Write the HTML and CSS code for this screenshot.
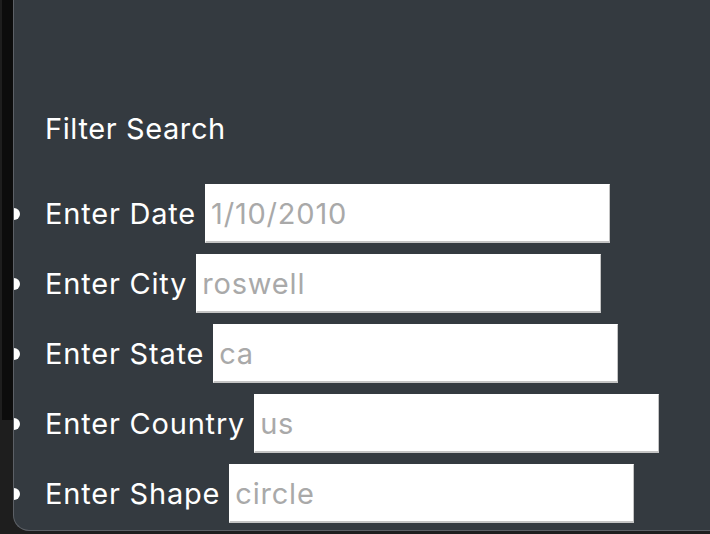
FILE: index.html
```html
<!DOCTYPE html>
<html>
<head>
<meta charset="utf-8">
<link rel="stylesheet" href="styles.css">
</head>
<body>
<div class="page">
  <div class="side"></div>
  <div class="panel">
    <h4 class="title">Filter Search</h4>
    <ul class="filters">
      <li class="row"><label class="lbl" for="date">Enter Date</label><input class="field" id="date" type="text" placeholder="1/10/2010"></li>
      <li class="row"><label class="lbl" for="city">Enter City</label><input class="field" id="city" type="text" placeholder="roswell"></li>
      <li class="row"><label class="lbl" for="state">Enter State</label><input class="field" id="state" type="text" placeholder="ca"></li>
      <li class="row"><label class="lbl" for="country">Enter Country</label><input class="field" id="country" type="text" placeholder="us"></li>
      <li class="row"><label class="lbl" for="shape">Enter Shape</label><input class="field" id="shape" type="text" placeholder="circle"></li>
    </ul>
  </div>
</div>
</body>
</html>
```

FILE: styles.css
```css
html, body {
  margin: 0;
  padding: 0;
  background: #1e1e1e;
}
.page {
  display: flex;
  width: 710px;
  height: 534px;
  overflow: hidden;
  background: #1e1e1e;
  font-family: Inter, "Liberation Sans", sans-serif;
}
.side {
  flex: 0 0 11px;
  margin-left: 2px;
  height: 420px;
  background: #0c0c0c;
}
.panel {
  flex: 1 0 auto;
  height: 531px;
  box-sizing: border-box;
  background: #343a40;
  border-left: 1px solid #5c6066;
  border-bottom: 1px solid #5c6066;
  border-bottom-left-radius: 16px;
  overflow: hidden;
  padding: 112px 0 0 31px;
}
.title {
  margin: 0;
  font-size: 29px;
  letter-spacing: 0.6px;
  font-weight: 400;
  line-height: 34px;
  color: #ffffff;
}
.filters {
  list-style: none;
  margin: 38px 0 0 0;
  padding: 0;
}
.row {
  position: relative;
  display: flex;
  align-items: center;
  gap: 9px;
  height: 59px;
  margin-bottom: 11px;
}
.row::before {
  content: "";
  position: absolute;
  left: -37px;
  top: 24px;
  width: 12px;
  height: 12px;
  border-radius: 50%;
  background: #ffffff;
}
.lbl {
  font-size: 29px;
  letter-spacing: 0.8px;
  line-height: 34px;
  color: #ffffff;
  white-space: nowrap;
}
.field {
  box-sizing: border-box;
  width: 405px;
  height: 59px;
  margin: 0;
  padding: 0 0 0 5px;
  border: 1px solid #ffffff;
  border-right-color: #c4c4c4;
  border-bottom: 2px solid #c4c4c4;
  background: #ffffff;
  font-family: Inter, "Liberation Sans", sans-serif;
  font-size: 29px;
  letter-spacing: 0.8px;
  color: #333;
  outline: none;
}
.field::placeholder {
  color: #a9a9a9;
}
```
